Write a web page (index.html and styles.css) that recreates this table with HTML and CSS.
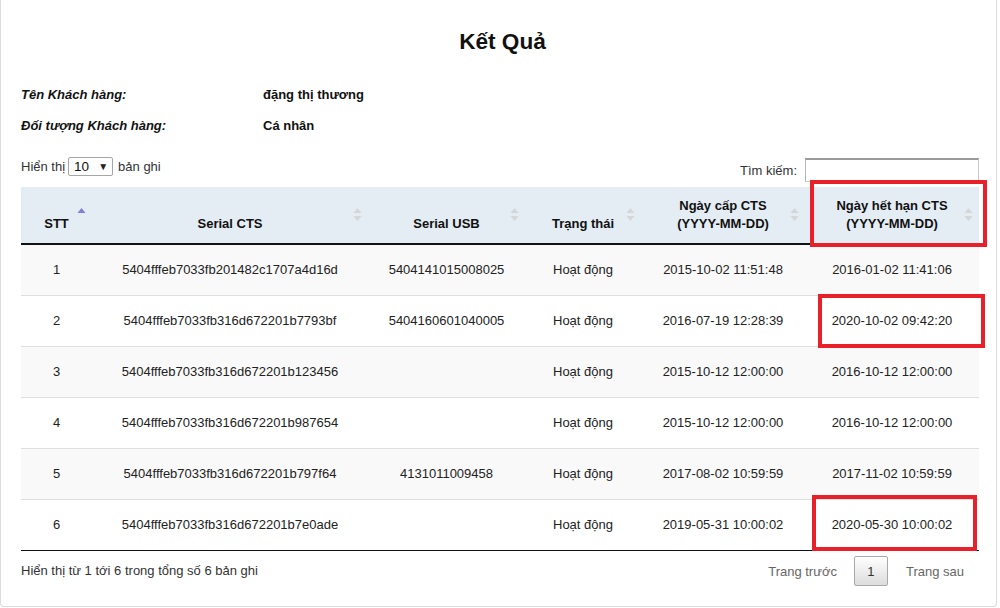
FILE: index.html
```html
<!DOCTYPE html>
<html lang="vi">
<head>
<meta charset="utf-8">
<title>Kết Quả</title>
<link rel="stylesheet" href="styles.css">
</head>
<body>
<div class="panel">
  <h1 class="title">Kết Quả</h1>
  <div class="info">
    <div class="info-row"><span class="label">Tên Khách hàng:</span><span class="value">đặng thị thương</span></div>
    <div class="info-row"><span class="label">Đối tượng Khách hàng:</span><span class="value">Cá nhân</span></div>
  </div>
  <div class="toolbar">
    <div class="length">Hiển thị <span class="select"><span>10</span><span class="caret">▼</span></span> bản ghi</div>
    <div class="search">Tìm kiếm: <span class="input"></span></div>
  </div>
  <table class="grid">
    <colgroup>
      <col class="c1"><col class="c2"><col class="c3"><col class="c4"><col class="c5"><col class="c6">
    </colgroup>
    <thead>
      <tr>
        <th>STT<svg class="sort" viewBox="0 0 9 15" width="9" height="15"><polygon points="0.5,6 4.5,1 8.5,6" fill="#7f7fd6"/></svg></th>
        <th>Serial CTS<svg class="sort" viewBox="0 0 9 15" width="9" height="15"><polygon points="0.5,6 4.5,1 8.5,6" fill="#d6d6d6"/><polygon points="0.5,9 8.5,9 4.5,14" fill="#d6d6d6"/></svg></th>
        <th>Serial USB<svg class="sort" viewBox="0 0 9 15" width="9" height="15"><polygon points="0.5,6 4.5,1 8.5,6" fill="#d6d6d6"/><polygon points="0.5,9 8.5,9 4.5,14" fill="#d6d6d6"/></svg></th>
        <th>Trạng thái<svg class="sort" viewBox="0 0 9 15" width="9" height="15"><polygon points="0.5,6 4.5,1 8.5,6" fill="#d6d6d6"/><polygon points="0.5,9 8.5,9 4.5,14" fill="#d6d6d6"/></svg></th>
        <th>Ngày cấp CTS<br>(YYYY-MM-DD)<svg class="sort" viewBox="0 0 9 15" width="9" height="15"><polygon points="0.5,6 4.5,1 8.5,6" fill="#d6d6d6"/><polygon points="0.5,9 8.5,9 4.5,14" fill="#d6d6d6"/></svg></th>
        <th>Ngày hết hạn CTS<br>(YYYY-MM-DD)<svg class="sort" viewBox="0 0 9 15" width="9" height="15"><polygon points="0.5,6 4.5,1 8.5,6" fill="#d6d6d6"/><polygon points="0.5,9 8.5,9 4.5,14" fill="#d6d6d6"/></svg></th>
      </tr>
    </thead>
    <tbody>
      <tr><td>1</td><td>5404fffeb7033fb201482c1707a4d16d</td><td>5404141015008025</td><td>Hoạt động</td><td>2015-10-02 11:51:48</td><td>2016-01-02 11:41:06</td></tr>
      <tr><td>2</td><td>5404fffeb7033fb316d672201b7793bf</td><td>5404160601040005</td><td>Hoạt động</td><td>2016-07-19 12:28:39</td><td>2020-10-02 09:42:20</td></tr>
      <tr><td>3</td><td>5404fffeb7033fb316d672201b123456</td><td></td><td>Hoạt động</td><td>2015-10-12 12:00:00</td><td>2016-10-12 12:00:00</td></tr>
      <tr><td>4</td><td>5404fffeb7033fb316d672201b987654</td><td></td><td>Hoạt động</td><td>2015-10-12 12:00:00</td><td>2016-10-12 12:00:00</td></tr>
      <tr><td>5</td><td>5404fffeb7033fb316d672201b797f64</td><td>4131011009458</td><td>Hoạt động</td><td>2017-08-02 10:59:59</td><td>2017-11-02 10:59:59</td></tr>
      <tr><td>6</td><td>5404fffeb7033fb316d672201b7e0ade</td><td></td><td>Hoạt động</td><td>2019-05-31 10:00:02</td><td>2020-05-30 10:00:02</td></tr>
    </tbody>
  </table>
  <div class="footer">
    <div class="summary">Hiển thị từ 1 tới 6 trong tổng số 6 bản ghi</div>
    <div class="pager">
      <span class="nav">Trang trước</span>
      <span class="page">1</span>
      <span class="nav">Trang sau</span>
    </div>
  </div>
  <div class="mark m1"></div>
  <div class="mark m2"></div>
  <div class="mark m3"></div>
</div>
</body>
</html>
```

FILE: styles.css
```css
* { box-sizing: border-box; }
html, body { margin: 0; padding: 0; background: #fff; }
body {
  font-family: "Liberation Sans", Arial, sans-serif;
  font-size: 13px;
  color: #222;
}
.panel {
  position: relative;
  width: 997px;
  height: 607px;
  border: 1px solid #dcdcdc;
  border-top: none;
  border-radius: 0 0 4px 4px;
  padding: 0 17px 0 20px;
}
.title {
  margin: 0;
  padding-top: 29px;
  padding-left: 5px;
  font-size: 22.6px;
  line-height: 26px;
  font-weight: bold;
  text-align: center;
  color: #111;
}
.info { margin-top: 24px; }
.info-row {
  display: flex;
  line-height: 31px;
  font-weight: bold;
  color: #111;
}
.label { width: 242px; font-style: italic; }
.toolbar {
  margin-top: 15px;
  height: 27px;
  display: flex;
  justify-content: space-between;
  align-items: flex-start;
  color: #333;
}
.length {
  display: flex;
  align-items: center;
  padding-top: 1px;
  line-height: 19px;
}
.select {
  display: inline-flex;
  align-items: center;
  justify-content: space-between;
  width: 45px;
  height: 19px;
  margin: 0 5px 0 3px;
  padding: 0 4px 0 5px;
  border: 1px solid #a6a6a6;
  border-radius: 2px;
  color: #111;
  font-size: 13.5px;
}
.caret { font-size: 10px; color: #222; }
.search {
  display: flex;
  align-items: center;
  margin-top: 2px;
}
.input {
  display: block;
  width: 174px;
  height: 24px;
  margin-left: 8px;
  border: 1px solid #c8c8c8;
  border-top: 2px solid #9a9a9a;
  border-left-color: #b5b5b5;
  background: #fff;
}
.grid {
  margin-top: 4px;
  width: 958px;
  table-layout: fixed;
  border-collapse: collapse;
  border-bottom: 1px solid #111;
}
.c1 { width: 71px; }
.c2 { width: 276px; }
.c3 { width: 157px; }
.c4 { width: 116px; }
.c5 { width: 164px; }
.c6 { width: 174px; }
.grid th {
  position: relative;
  background: #e4ecf4;
  padding: 10px 4px;
  line-height: 18px;
  font-weight: bold;
  color: #111;
  text-align: center;
  vertical-align: bottom;
  border-bottom: 2px solid #111;
}
.sort {
  position: absolute;
  right: 6px;
  top: 50%;
  margin-top: -8px;
}
.grid td {
  padding: 16px 4px;
  line-height: 18px;
  text-align: center;
  border-top: 1px solid #dedede;
  white-space: nowrap;
}
.grid tbody tr:first-child td { border-top: none; }
.grid tbody tr:nth-child(odd) td { background: #f9f9f9; }
.grid tbody tr:nth-child(even) td { background: #fff; }
.footer {
  margin-top: 5px;
  display: flex;
  justify-content: space-between;
  align-items: center;
  color: #333;
}
.summary { margin-top: -2px; }
.pager {
  display: flex;
  align-items: center;
  padding-right: 15px;
}
.nav { color: #666; }
.page {
  display: flex;
  align-items: center;
  justify-content: center;
  width: 34px;
  height: 30px;
  margin: 0 18px 0 17px;
  border: 1px solid #a9a9a9;
  border-radius: 2px;
  background: linear-gradient(#ffffff, #dcdcdc);
  color: #333;
}
.mark {
  position: absolute;
  border: 4px solid #e8202a;
}
.m1 { left: 809px; top: 180px; width: 177px; height: 67px; }
.m2 { left: 817px; top: 294px; width: 167px; height: 54px; }
.m3 { left: 811px; top: 495px; width: 165px; height: 56px; }
```
